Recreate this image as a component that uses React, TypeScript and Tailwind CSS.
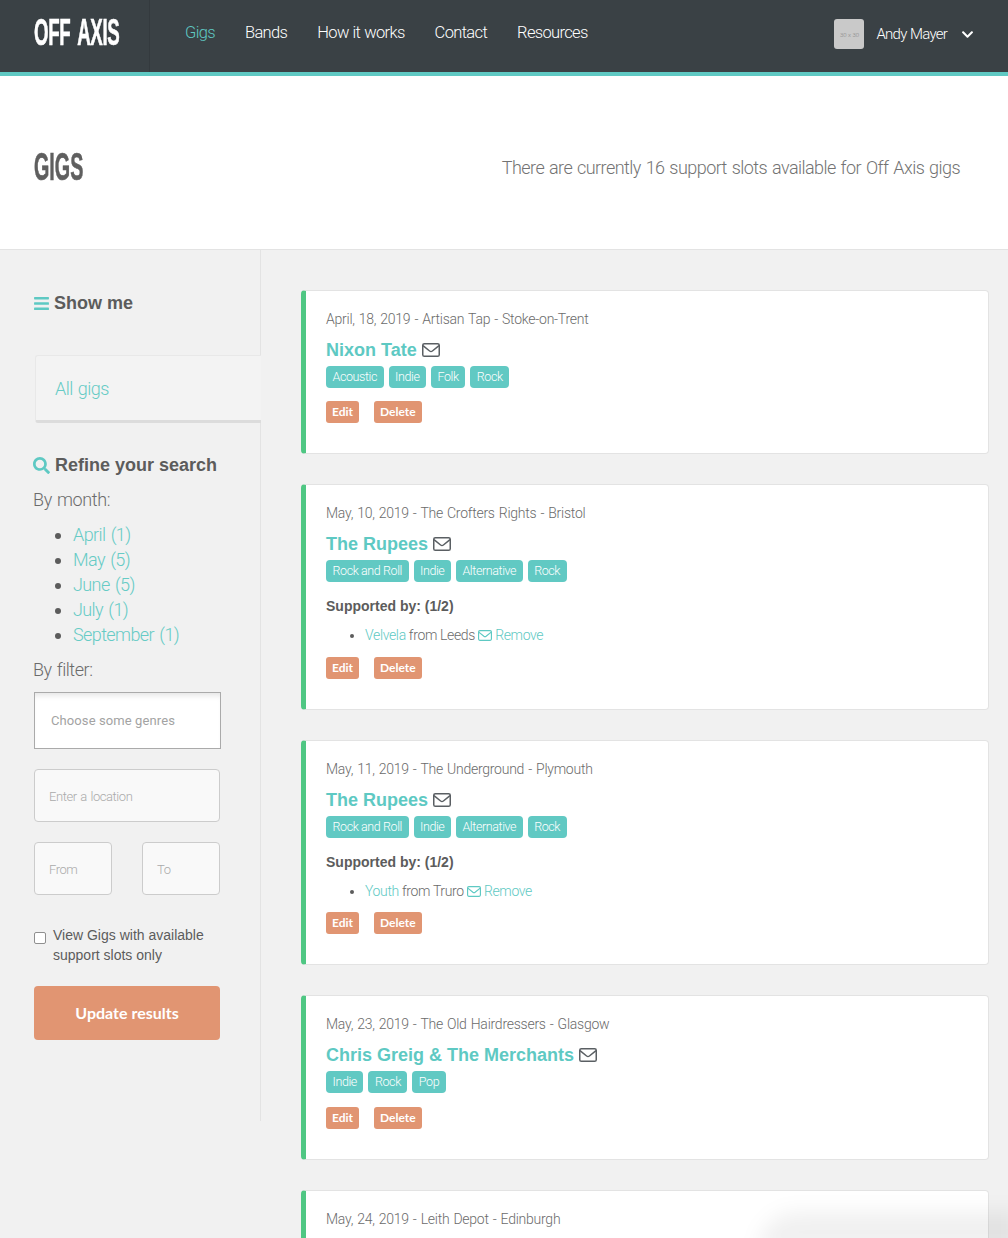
import { FaBars, FaChevronDown, FaSearch } from 'react-icons/fa';

interface Gig {
  when: string;
  band: string;
  tags: string[];
  support?: { band: string; from: string };
  className: string;
  actionsClass: string;
}

const gigs: Gig[] = [
  { when: 'April, 18, 2019 - Artisan Tap - Stoke-on-Trent', band: 'Nixon Tate', tags: ['Acoustic', 'Indie', 'Folk', 'Rock'], className: 'h-[164px]', actionsClass: 'mt-[13px]' },
  {
    when: 'May, 10, 2019 - The Crofters Rights - Bristol',
    band: 'The Rupees',
    tags: ['Rock and Roll', 'Indie', 'Alternative', 'Rock'],
    support: { band: 'Velvela', from: 'Leeds' },
    className: 'h-[226px]',
    actionsClass: 'mt-[12px]',
  },
  {
    when: 'May, 11, 2019 - The Underground - Plymouth',
    band: 'The Rupees',
    tags: ['Rock and Roll', 'Indie', 'Alternative', 'Rock'],
    support: { band: 'Youth', from: 'Truro' },
    className: 'h-[225px]',
    actionsClass: 'mt-[11px]',
  },
  { when: 'May, 23, 2019 - The Old Hairdressers - Glasgow', band: 'Chris Greig & The Merchants', tags: ['Indie', 'Rock', 'Pop'], className: 'h-[165px]', actionsClass: 'mt-[14px]' },
];

const months = ['April (1)', 'May (5)', 'June (5)', 'July (1)', 'September (1)'];
const nav = ['Bands', 'How it works', 'Contact', 'Resources'];

function Envelope({ className }: { className: string }) {
  return (
    <svg viewBox="0 0 18 14" fill="none" stroke="currentColor" strokeWidth="1.5" className={className}>
      <rect x="0.75" y="0.75" width="16.5" height="12.5" rx="1.6" />
      <path d="M1 2.6 L7.6 8 Q9 9 10.4 8 L17 2.6" />
    </svg>
  );
}

function GigCard({ gig }: { gig: Gig }) {
  return (
    <div className={`bg-white rounded-[4px] border border-[#e3e3e3] border-l-[5px] border-l-[#4fc783] pl-[20px] pt-[18px] ${gig.className}`}>
      <p className="text-[14px] leading-[20px] text-[#6b6b6b] tracking-[-0.25px] [word-spacing:0.9px]">{gig.when}</p>
      <div className="mt-[10px] flex items-center gap-[5px] h-[22px]">
        <span className="font-['Liberation_Sans',sans-serif] font-bold text-[18px] text-[#5ec9c3]">{gig.band}</span>
        <Envelope className="text-[#5a5f63] w-[18px] h-[14px]" />
      </div>
      <div className="mt-[5px] flex gap-[5px]">
        {gig.tags.map((t) => (
          <span key={t} className="h-[22px] px-[6.5px] rounded-[4px] bg-[#61c9c3] text-white text-[12.5px] leading-[22px] tracking-[-0.4px]">
            {t}
          </span>
        ))}
      </div>
      {gig.support && (
        <div className="mt-[14px]">
          <p className="font-['Liberation_Sans',sans-serif] font-bold text-[14px] leading-[20px] text-[#5c5c5c]">Supported by: (1/2)</p>
          <ul className="mt-[9px] pl-[39px] list-disc text-[14px] leading-[20px] text-[#6b6b6b] marker:text-[#5c5c5c] tracking-[-0.35px]">
            <li>
              <span className="text-[#5ec9c3]">{gig.support.band}</span> from {gig.support.from}{' '}
              <Envelope className="inline text-[#5ec9c3] w-[14px] h-[11px] -mt-[2px]" /> <span className="text-[#5ec9c3]">Remove</span>
            </li>
          </ul>
        </div>
      )}
      <div className={`${gig.actionsClass} flex gap-[15px]`}>
        <span className="h-[22px] px-[6px] rounded-[3px] bg-[#e19572] text-white font-['Lato',sans-serif] font-bold text-[12px] leading-[22px]">Edit</span>
        <span className="h-[22px] px-[6px] rounded-[3px] bg-[#e19572] text-white font-['Lato',sans-serif] font-bold text-[12px] leading-[22px]">Delete</span>
      </div>
    </div>
  );
}

function Sidebar() {
  return (
    <aside className="w-[261px] h-[871px] shrink-0 border-r border-[#e3e3e3] pt-[42px]">
      <h3 className="pl-[33px] flex items-center gap-[4px] font-['Liberation_Sans',sans-serif] font-bold text-[18px] leading-[22px] text-[#5c5c5c]">
        <FaBars className="text-[#5ec9c3] w-[17px] h-[17px]" />
        Show me
      </h3>
      <div className="ml-[35px] -mr-px mt-[41px] h-[68px] bg-[#f3f3f3] rounded-l-[3px] border border-r-0 border-[#e8e8e8] border-b-[3px] border-b-[#dcdcdc] pl-[19px] pt-[21px] text-[18px] leading-[24px] text-[#66cbc5] tracking-[-0.5px] [word-spacing:1px]">
        All gigs
      </div>
      <div className="pl-[33px] pr-[40px]">
        <h3 className="mt-[31px] flex items-center gap-[5px] font-['Liberation_Sans',sans-serif] font-bold text-[18px] leading-[22px] text-[#5c5c5c]">
          <FaSearch className="text-[#5ec9c3] w-[17px] h-[17px]" />
          Refine your search
        </h3>
        <p className="mt-[12px] text-[18px] leading-[24px] text-[#6b6b6b] tracking-[-0.35px] [word-spacing:1px]">By month:</p>
        <ul className="mt-[10px] pl-[40px] list-disc marker:text-[#5c5c5c] text-[18px] leading-[25px] text-[#66cbc5] tracking-[-0.6px] [word-spacing:1.5px]">
          {months.map((m) => (
            <li key={m}>{m}</li>
          ))}
        </ul>
        <p className="mt-[11px] text-[18px] leading-[24px] text-[#6b6b6b] tracking-[-0.45px] [word-spacing:1px]">By filter:</p>
        <div className="mt-[10px] ml-px -mr-px h-[57px] w-[187px] bg-white border border-[#aaa] shadow-[inset_0_6px_6px_-4px_rgba(0,0,0,0.12)] pl-[16px] flex items-center text-[13px] text-[#a3a3a3] font-normal tracking-[0.1px]">
          Choose some genres
        </div>
        <div className="mt-[20px] ml-px h-[53px] w-[186px] bg-[#f9f9f9] border border-[#ccc] rounded-[4px] pl-[14px] pt-[2px] flex items-center text-[13px] text-[#aaa] tracking-[-0.45px] [word-spacing:1px]">
          Enter a location
        </div>
        <div className="mt-[20px] ml-px w-[186px] flex justify-between">
          <div className="h-[53px] w-[78px] bg-[#f9f9f9] border border-[#ccc] rounded-[4px] pl-[14px] pt-[2px] flex items-center text-[13px] text-[#aaa] tracking-[-0.45px]">From</div>
          <div className="h-[53px] w-[78px] bg-[#f9f9f9] border border-[#ccc] rounded-[4px] pl-[14px] pt-[2px] flex items-center text-[13px] text-[#aaa] tracking-[-0.45px]">To</div>
        </div>
        <div className="mt-[30px] ml-px flex gap-[7px]">
          <span className="mt-[7px] w-[12px] h-[12px] shrink-0 bg-white border border-[#8f8f8f] rounded-[2px]" />
          <span className="font-['Liberation_Sans',sans-serif] text-[14px] leading-[20px] text-[#5c5c5c] w-[170px]">View Gigs with available support slots only</span>
        </div>
        <div className="mt-[21px] ml-px h-[54px] w-[186px] rounded-[4px] bg-[#e19572] flex items-center justify-center text-white font-['Lato',sans-serif] font-bold text-[16px]">
          Update results
        </div>
      </div>
    </aside>
  );
}

export default function App() {
  return (
    <div className="relative h-[1238px] overflow-hidden bg-[#f1f1f1] font-[Roboto,sans-serif] font-light">
      <header className="h-[76px] bg-[#3a4145] border-b-[4px] border-[#5fc9c3] flex items-stretch">
        <div className="w-[150px] shrink-0 border-r border-[#343a3e] pl-[34px] flex items-center pb-[6px]">
          <span className="font-['Liberation_Sans',sans-serif] font-bold text-[37px] text-white origin-left scale-x-[0.505] whitespace-nowrap tracking-[-0.8px] [word-spacing:6px] [-webkit-text-stroke:0.7px_#fff]">OFF AXIS</span>
        </div>
        <nav className="flex items-center pl-[35px] pb-[6px] gap-[30px] text-[16.5px] text-white tracking-[-0.65px] [word-spacing:0.5px]">
          <span className="text-[#5fc9c3]">Gigs</span>
          {nav.map((n) => (
            <span key={n}>{n}</span>
          ))}
        </nav>
        <div className="ml-auto flex items-center pr-[34px] pb-[4px]">
          <div className="w-[30px] h-[30px] rounded-[3px] bg-[#c9c9c9] flex items-center justify-center text-[6px] text-[#888]">30 x 30</div>
          <span className="ml-[12px] text-[15px] text-white tracking-[-0.75px] [word-spacing:0.5px]">Andy Mayer</span>
          <FaChevronDown className="ml-[14px] text-white w-[13px] h-[13px]" />
        </div>
      </header>

      <section className="h-[174px] bg-white border-b border-[#e3e3e3] pl-[34px] pr-[48px] pt-[9px] flex items-center justify-between">
        <h1 className="font-['Liberation_Sans',sans-serif] font-bold text-[38px] text-[#5f5f5f] origin-left scale-x-[0.52] [-webkit-text-stroke:0.6px_#5f5f5f]">GIGS</h1>
        <p className="text-[18px] text-[#737373] tracking-[-0.55px] [word-spacing:1px]">There are currently 16 support slots available for Off Axis gigs</p>
      </section>

      <div className="flex">
        <Sidebar />
        <main className="flex-1 pl-[40px] pr-[19px] pt-[40px] flex flex-col gap-[30px]">
          {gigs.map((g) => (
            <GigCard key={g.when} gig={g} />
          ))}
          <div className="bg-white rounded-[4px] border border-[#e3e3e3] border-l-[5px] border-l-[#4fc783] pl-[20px] pt-[18px] h-[100px]">
            <p className="text-[14px] leading-[20px] text-[#6b6b6b] tracking-[-0.25px] [word-spacing:0.9px]">May, 24, 2019 - Leith Depot - Edinburgh</p>
          </div>
        </main>
      </div>

      <div className="absolute -right-[10px] -bottom-[14px] w-[260px] h-[40px] rounded-tl-[40px] bg-black/[0.06] blur-[10px]" />
    </div>
  );
}
